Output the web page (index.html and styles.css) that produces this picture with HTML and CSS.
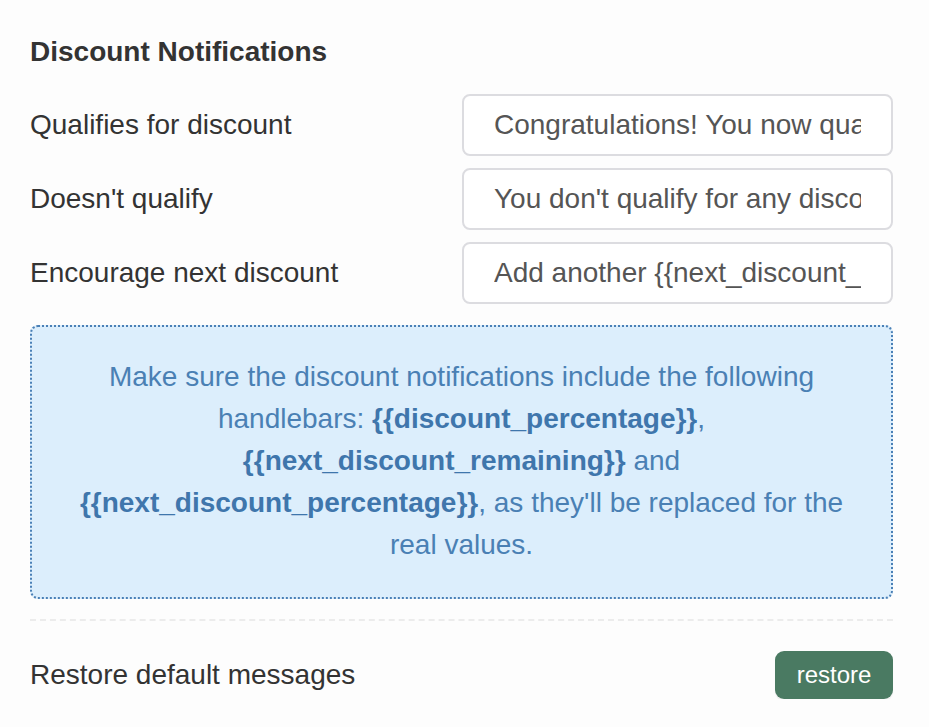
FILE: index.html
```html
<!DOCTYPE html>
<html>
<head>
<meta charset="utf-8">
<link rel="stylesheet" href="styles.css">
</head>
<body>
<div class="panel">
  <h2 class="title">Discount Notifications</h2>
  <div class="rows">
    <div class="row">
      <label class="label">Qualifies for discount</label>
      <input class="field" type="text" value="Congratulations! You now qualify for a {{discount_percentage}} discount">
    </div>
    <div class="row">
      <label class="label">Doesn't qualify</label>
      <input class="field" type="text" value="You don't qualify for any discount yet">
    </div>
    <div class="row">
      <label class="label">Encourage next discount</label>
      <input class="field" type="text" value="Add another {{next_discount_remaining}} to get {{next_discount_percentage}} off">
    </div>
  </div>
  <p class="info">Make sure the discount notifications include the following handlebars: <b>{{discount_percentage}}</b>, <b>{{next_discount_remaining}}</b> and <b>{{next_discount_percentage}}</b>, as they'll be replaced for the real values.</p>
  <hr class="sep">
  <div class="restore-row">
    <span class="label">Restore default messages</span>
    <button class="btn">restore</button>
  </div>
</div>
</body>
</html>
```
FILE: styles.css
```css
html, body {
  margin: 0;
  padding: 0;
  background: #fdfdfd;
}
body {
  font-family: "Liberation Sans", Arial, sans-serif;
  color: #333;
}
.panel {
  width: 863px;
  padding: 30px 0 0 30px;
}
.title {
  margin: 0;
  font-size: 28px;
  line-height: 44px;
  font-weight: bold;
  color: #333;
}
.rows {
  margin-top: 20px;
  display: flex;
  flex-direction: column;
  gap: 12px;
}
.row {
  display: flex;
  align-items: center;
  justify-content: space-between;
}
.label {
  font-size: 28px;
  color: #333;
}
.field {
  box-sizing: border-box;
  width: 431px;
  height: 62px;
  border: 2px solid #dcdce0;
  border-radius: 8px;
  background: #fff;
  padding: 0 30px;
  font-family: "Liberation Sans", Arial, sans-serif;
  font-size: 28px;
  color: #555;
  outline: none;
}
.info {
  margin: 21px 0 0 0;
  box-sizing: border-box;
  height: 274px;
  border: 2px dotted #4a80b6;
  border-radius: 8px;
  background: #dceefc;
  padding: 29px 40px;
  text-align: center;
  font-size: 28px;
  line-height: 42px;
  color: #4a80b4;
}
.info b {
  color: #3f76ac;
}
.sep {
  margin: 20px 0 0 0;
  border: 0;
  border-top: 2px dashed #ececec;
  height: 0;
}
.restore-row {
  margin-top: 30px;
  display: flex;
  align-items: center;
  justify-content: space-between;
}
.btn {
  width: 118px;
  height: 48px;
  border: 0;
  border-radius: 9px;
  background: #4a7a62;
  color: #fff;
  font-family: "Liberation Sans", Arial, sans-serif;
  font-size: 24px;
  padding: 0;
  box-shadow: 0 2px 1px rgba(0,0,0,0.06);
}
```
